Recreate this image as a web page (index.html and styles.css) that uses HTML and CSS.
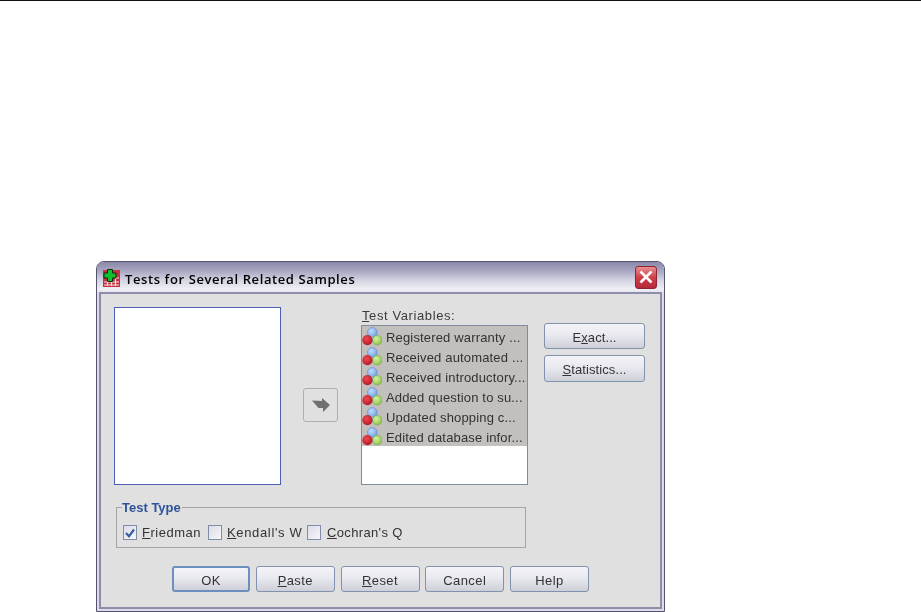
FILE: index.html
```html
<!DOCTYPE html>
<html lang="en">
<head>
<meta charset="utf-8">
<title>Tests for Several Related Samples</title>
<link rel="stylesheet" href="styles.css">
</head>
<body>
<svg class="defs" width="0" height="0" aria-hidden="true">
  <defs>
    <radialGradient id="gb" cx="40%" cy="35%" r="70%"><stop offset="0" stop-color="#c4dcf8"/><stop offset="1" stop-color="#6a9ce0"/></radialGradient>
    <radialGradient id="gr" cx="40%" cy="35%" r="70%"><stop offset="0" stop-color="#f04a52"/><stop offset="1" stop-color="#b01424"/></radialGradient>
    <radialGradient id="gg" cx="40%" cy="35%" r="70%"><stop offset="0" stop-color="#d4f0a4"/><stop offset="1" stop-color="#86c244"/></radialGradient>
    <symbol id="var" viewBox="0 0 20 20">
      <circle cx="10.300" cy="6.500" r="5" fill="url(#gb)" stroke="#5a88c8" stroke-width=".5"/>
      <circle cx="15.200" cy="14.200" r="4.800" fill="url(#gg)" stroke="#6aa838" stroke-width=".5"/>
      <circle cx="5.400" cy="14.200" r="5.100" fill="url(#gr)"/>
    </symbol>
  </defs>
</svg>
<div class="rule"></div>
<section class="dialog">
  <header class="titlebar">
    <svg class="app-icon" width="17" height="18" viewBox="0 0 17 18">
      <rect x="0" y="1" width="17" height="17" fill="#c8303f"/>
      <path d="M1 13h15M1 16h15M4.500 12v5M8.500 12v5M12.500 5v12M13 9h3" stroke="#f8dfe1" stroke-width="1.200" fill="none"/>
      <path d="M4.500.5h5v3.500H13v5H9.500v3.500h-5V9H1V4h3.500z" fill="#10c030" stroke="#0a2a10" stroke-width="1"/>
    </svg>
    <h1 class="title">Tests for Several Related Samples</h1>
    <button class="close" aria-label="Close">
      <svg width="14" height="14" viewBox="0 0 14 14"><path d="M1.500 1.500l11 11M12.500 1.500l-11 11" stroke="#fff" stroke-width="2.600" fill="none"/></svg>
    </button>
  </header>
  <div class="content">
    <div class="top">
      <div class="source-list"></div>
      <div class="mover">
        <button class="move-btn" aria-label="Move">
          <svg width="18" height="14" viewBox="0 0 18 14"><path d="M0 2.500L10 3V0l8 7-7 7v-4H6.500z" fill="#707070"/></svg>
        </button>
      </div>
      <div class="vars">
        <label class="vars-label"><u>T</u>est Variables:</label>
        <ul class="var-list">
          <li class="var-row"><svg class="var-icon"><use href="#var"/></svg>Registered warranty ...</li>
          <li class="var-row"><svg class="var-icon"><use href="#var"/></svg>Received automated ...</li>
          <li class="var-row"><svg class="var-icon"><use href="#var"/></svg>Received introductory...</li>
          <li class="var-row"><svg class="var-icon"><use href="#var"/></svg>Added question to su...</li>
          <li class="var-row"><svg class="var-icon"><use href="#var"/></svg>Updated shopping c...</li>
          <li class="var-row"><svg class="var-icon"><use href="#var"/></svg>Edited database infor...</li>
        </ul>
      </div>
      <div class="side">
        <button class="btn side-btn">E<u>x</u>act...</button>
        <button class="btn side-btn"><u>S</u>tatistics...</button>
      </div>
    </div>
    <fieldset class="group">
      <legend class="legend">Test Type</legend>
      <label class="check check-a"><span class="box on"><svg width="12" height="12" viewBox="0 0 12 12"><path d="M2 6l3 3.200L10 2.500" stroke="#3560a8" stroke-width="2.200" fill="none"/></svg></span><span><u>F</u>riedman</span></label>
      <label class="check check-b"><span class="box"></span><span><u>K</u>endall's W</span></label>
      <label class="check check-c"><span class="box"></span><span><u>C</u>ochran's Q</span></label>
    </fieldset>
    <div class="actions">
      <button class="btn act default">OK</button>
      <button class="btn act"><u>P</u>aste</button>
      <button class="btn act"><u>R</u>eset</button>
      <button class="btn act">Cancel</button>
      <button class="btn act">Help</button>
    </div>
  </div>
</section>
</body>
</html>
```
FILE: styles.css
```css
* { box-sizing: border-box; }
html, body { margin: 0; padding: 0; background: #fff; height: 100%; overflow: hidden; }
body { font-family: "Liberation Sans", Arial, sans-serif; font-size: 13px; color: #333; }
.defs { display: block; height: 0; }
.rule { height: 1px; background: #111; }
u { text-underline-offset: 1px; }

.dialog {
  margin: 260px 0 0 96px;
  width: 569px;
  height: 351px;
  background: #dcdce8;
  border: 1px solid #55536f;
  border-radius: 8px 8px 0 0;
  padding: 0 2px 2px;
  display: flex;
  flex-direction: column;
  filter: blur(.3px);
}
.titlebar {
  height: 30px;
  margin: 0 -2px;
  padding: 0 7px 0 6px;
  display: flex;
  align-items: center;
  border-radius: 7px 7px 0 0;
  background: linear-gradient(#8a88a8 0, #a9a7c2 30%, #d5d5e3 62%, #eeeef4 90%, #e6e6ee 100%);
}
.app-icon { flex: none; margin-top: 1px; }
.title {
  flex: 1;
  margin: 3px 0 0 5px;
  font-family: "Open Sans", "Liberation Sans", sans-serif;
  font-size: 13px;
  font-weight: 600;
  letter-spacing: .6px;
  color: #000;
}
.close {
  width: 22px;
  height: 23px;
  padding: 0;
  display: flex;
  align-items: center;
  justify-content: center;
  border: 1px solid #8f2233;
  border-radius: 3px;
  background: linear-gradient(#e88f90, #cf3f48 50%, #b52a3a);
}

.content {
  flex: 1;
  background: #e0e0e0;
  border: 2px solid #8f8daa;
  padding: 13px 0 0 13px;
  display: flex;
  flex-direction: column;
}
.top { display: flex; height: 178px; }
.source-list { width: 167px; background: #fff; border: 1px solid #4a5fb0; }
.mover { width: 80px; display: flex; justify-content: flex-start; align-items: flex-start; padding: 81px 0 0 22px; }
.move-btn {
  width: 35px;
  height: 34px;
  padding: 0;
  display: flex;
  align-items: center;
  justify-content: center;
  background: #e0e0e0;
  border: 1px solid #aeaeae;
  border-radius: 3px;
}
.vars { width: 167px; display: flex; flex-direction: column; }
.vars-label { height: 18px; line-height: 18px; padding-left: 1px; letter-spacing: .6px; color: #3a3a3a; }
.var-list {
  flex: 1;
  list-style: none;
  margin: 0;
  padding: 0;
  background: #fff;
  border: 1px solid #7e8ea0;
  overflow: hidden;
}
.var-row {
  height: 20px;
  padding-top: 2px;
  display: flex;
  align-items: center;
  background: #c2bfbd;
  white-space: nowrap;
  letter-spacing: .16px;
  color: #333;
}
.var-icon { width: 20px; height: 20px; flex: none; margin: -2px 4px 0 0; }
.side { margin-left: 16px; padding-top: 16px; display: flex; flex-direction: column; gap: 6px; }

.btn {
  font: inherit;
  color: #333;
  letter-spacing: .4px;
  padding: 2px 0 0;
  border: 1px solid #7f93ad;
  border-radius: 3px;
  background: linear-gradient(#f3f3f8 0, #e9e9f0 45%, #cfcfd8 100%);
}
.side-btn { width: 101px; height: 27px; letter-spacing: .1px; }
.side-btn:first-child { height: 26px; }

.group {
  margin: 14px 0 0 2px;
  padding: 10px 0 0 6px;
  width: 410px;
  height: 49px;
  border: 1px solid #a5a5a5;
  display: flex;
  align-items: flex-start;
}
.legend {
  padding: 1px 1px 0 0;
  margin-left: -1px;
  height: 16px;
  line-height: 16px;
  font-weight: bold;
  font-size: 13px;
  letter-spacing: 0;
  color: #2f539b;
}
.check { display: flex; align-items: center; letter-spacing: .5px; color: #333; }
.check-a { width: 85px; }
.check-b { width: 99px; letter-spacing: .65px; }
.check-c { letter-spacing: .35px; }
.check-c .box { margin-right: 6px; }
.box {
  width: 14px;
  height: 15px;
  margin-right: 5px;
  display: flex;
  align-items: center;
  justify-content: center;
  border: 1px solid #7f8fa8;
  background: linear-gradient(135deg, #dcdce6, #f6f6fa);
}
.actions { margin-top: 18px; margin-left: -13px; display: flex; justify-content: center; gap: 5.75px; }
.act { width: 79px; height: 26px; }
.default { width: 78px; border: 2px solid #6d8fc0; }
```
